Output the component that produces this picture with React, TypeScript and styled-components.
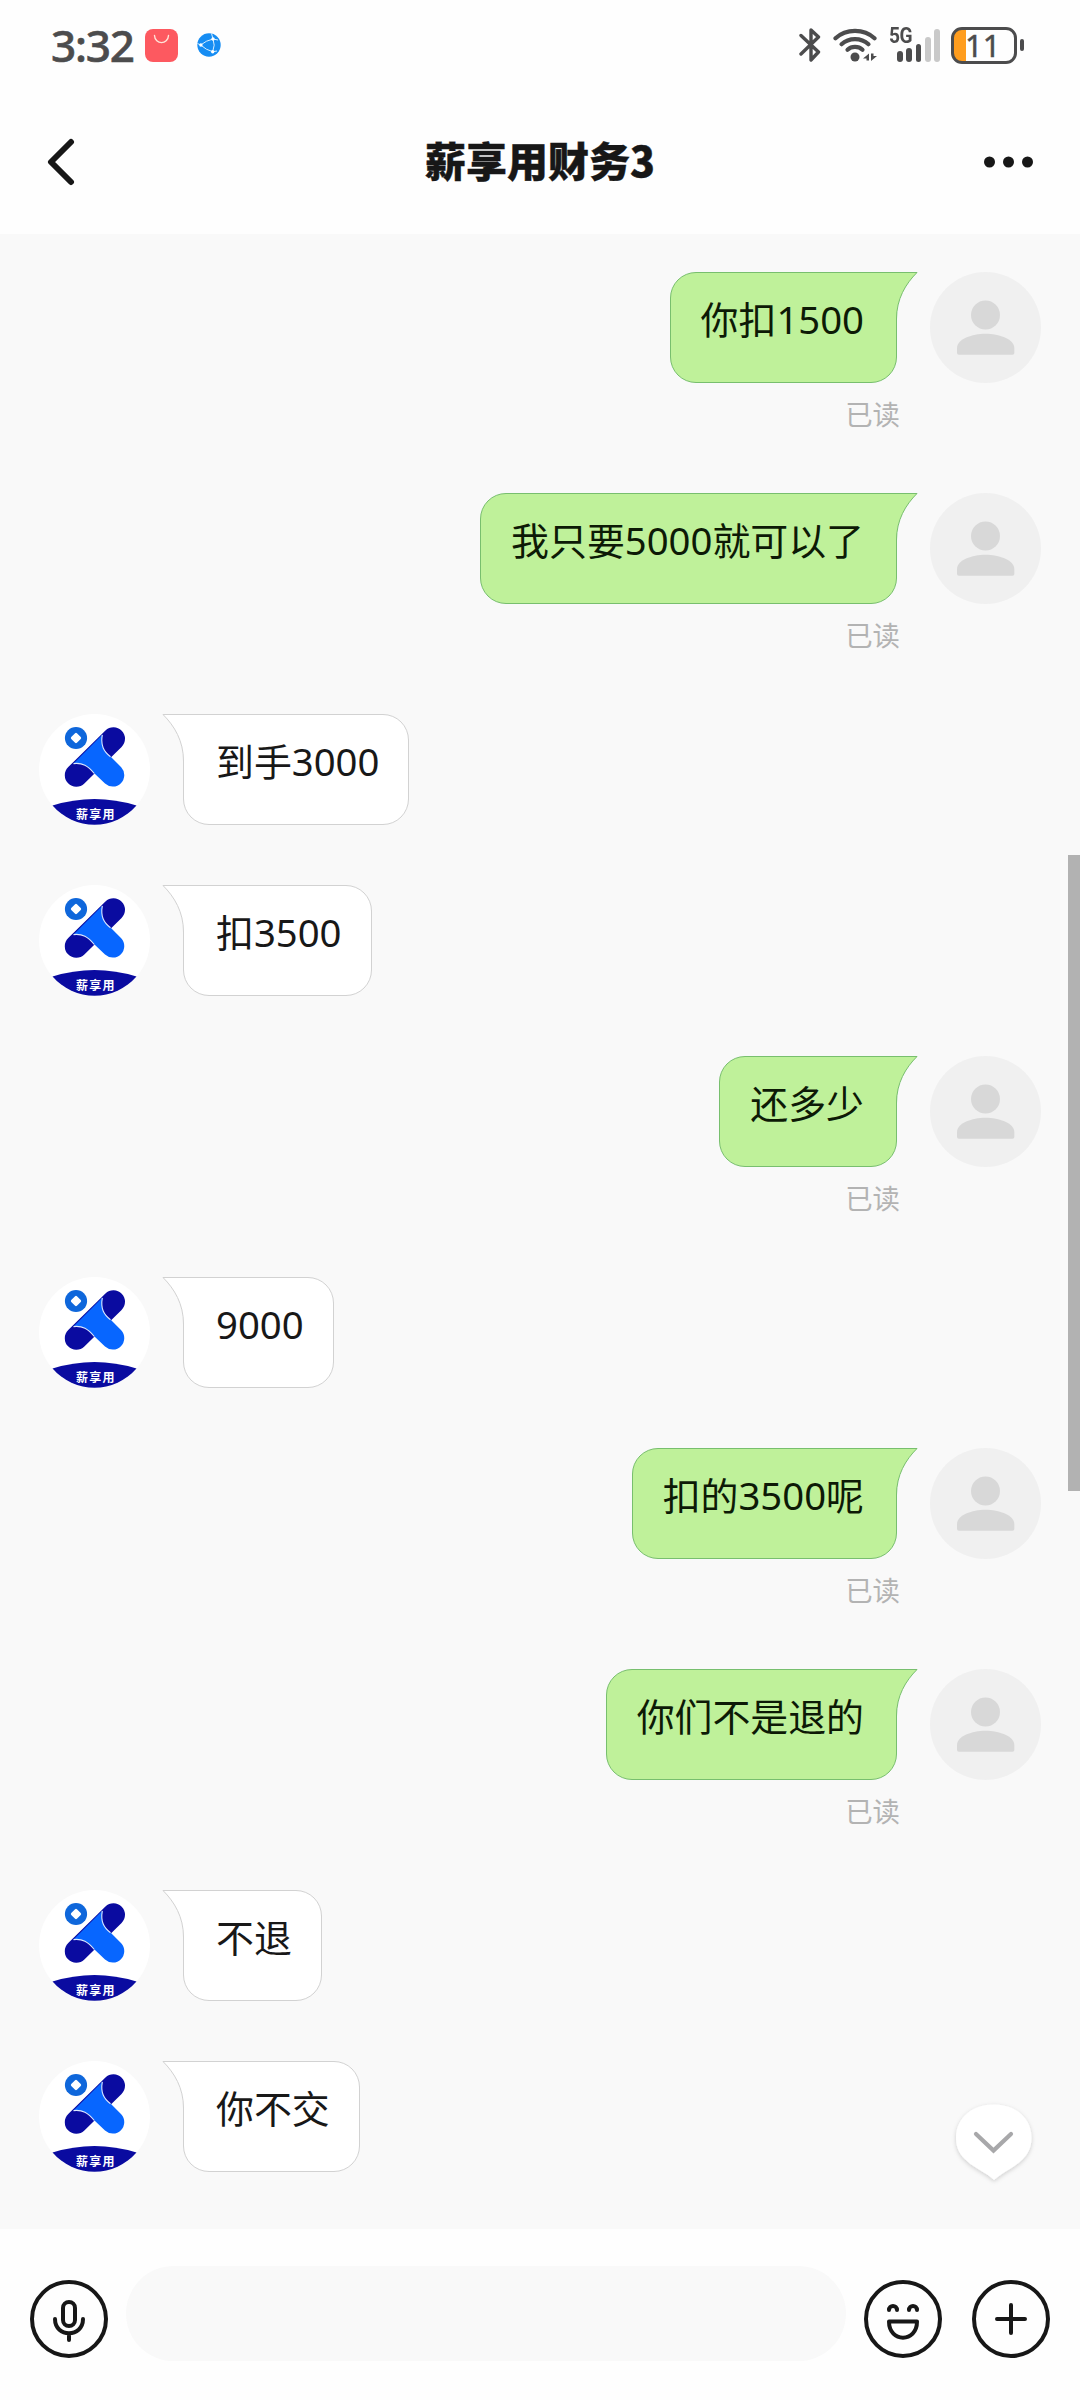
import React from "react";
import styled, { createGlobalStyle, css } from "styled-components";

const GlobalStyle = createGlobalStyle`
  *, *::before, *::after { box-sizing: border-box; }
  body {
    margin: 0;
    background: #fefefe;
    font-family: "Noto Sans", "Noto Sans CJK SC", sans-serif;
    color: #181818;
  }
  svg { display: block; flex: none; }
`;

const Screen = styled.div`
  width: 1080px;
  height: 2400px;
  display: flex;
  flex-direction: column;
  overflow: hidden;
  background: #fefefe;
`;

/* ---------- status bar ---------- */

const StatusBar = styled.div`
  height: 92px;
  flex: none;
  display: flex;
  justify-content: space-between;
  padding: 0 56px 0 51px;
  color: #4c4c4d;
`;

const StatusGroup = styled.div`
  display: flex;
  align-items: center;
  height: 90px;
`;

const Clock = styled.span`
  width: 94px;
  font-size: 44px;
  line-height: 60px;
  letter-spacing: -1.2px;
  font-weight: 500;
  -webkit-text-stroke: 0.6px #4c4c4d;
  white-space: nowrap;
`;

const ShopIcon = styled.svg`
  margin-right: 19px;
`;

const BluetoothIcon = styled.svg`
  margin-right: 12px;
`;

const WifiIcon = styled.svg`
  margin-right: 11px;
`;

const Signal = styled.div`
  position: relative;
  width: 51px;
  height: 34px;
  margin-right: 11px;
  display: flex;
  align-items: flex-end;
  justify-content: flex-end;
  gap: 3.6px;
`;

const SignalBar = styled.span<{ $height: number; $off?: boolean }>`
  width: 5.7px;
  height: ${(p) => p.$height}px;
  border-radius: 3px;
  background: ${(p) => (p.$off ? "#c9c9c9" : "#4c4c4d")};
`;

const NetworkType = styled.span`
  position: absolute;
  left: 0;
  top: -5px;
  font: 700 22px/26px "Roboto", sans-serif;
  letter-spacing: -0.5px;
  transform: scaleX(0.87);
  transform-origin: left;
`;

const Battery = styled.div`
  width: 66px;
  height: 37px;
  border: 3px solid #4c4c4d;
  border-radius: 11px;
  display: flex;
  align-items: center;
  background: linear-gradient(to right, #ff9d1e 12px, transparent 12px);
  font: 400 31px/37px "Noto Sans", sans-serif;
  -webkit-text-stroke: 0.5px #4c4c4d;
  padding-left: 11px;
`;

const BatteryNub = styled.span`
  width: 4px;
  height: 12px;
  margin-left: 3px;
  border-radius: 2px;
  background: #4c4c4d;
`;

/* ---------- header ---------- */

const Header = styled.header`
  height: 142px;
  flex: none;
  display: grid;
  grid-template-columns: 1fr auto 1fr;
  align-items: center;
  padding: 0 47px 3px;

  & > :last-child {
    justify-self: end;
  }
`;

const Title = styled.h1`
  margin: 0;
  padding-bottom: 5px;
  font: 900 41px/60px "Noto Sans CJK SC", sans-serif;
  -webkit-text-stroke: 0.4px #171717;
  color: #171717;
`;

/* ---------- messages ---------- */

const Chat = styled.main`
  position: relative;
  flex: 1;
  min-height: 0;
  display: flex;
  flex-direction: column;
  gap: 60px;
  padding: 38px 39px 0;
  background: #f9f9f9;
`;

const Row = styled.div<{ $mine?: boolean }>`
  display: flex;
  flex: none;
  align-items: flex-start;
  gap: 33px;
  flex-direction: ${(p) => (p.$mine ? "row-reverse" : "row")};
`;

const Stack = styled.div<{ $mine?: boolean }>`
  display: flex;
  flex-direction: column;
  align-items: ${(p) => (p.$mine ? "flex-end" : "flex-start")};
`;

const mineBubble = css`
  padding: 20px 32px 0 30px;
  background: #bff19a;
  border-color: #78bf6e;
  border-top-right-radius: 0;
  color: #0d1a06;
`;

const theirBubble = css`
  padding: 20px 29px 0 32px;
  background: #ffffff;
  border-color: #d2d2d2;
  border-top-left-radius: 0;
  color: #181818;
`;

const Bubble = styled.div<{ $mine?: boolean }>`
  position: relative;
  height: 111px;
  border: 1px solid;
  border-radius: 26px;
  font-size: 37.9px;
  line-height: 52px;
  white-space: nowrap;
  ${(p) => (p.$mine ? mineBubble : theirBubble)}
`;

const Tail = styled.svg<{ $mine?: boolean }>`
  position: absolute;
  top: -1px;
  ${(p) => (p.$mine ? "right: -22px;" : "left: -22px; transform: scaleX(-1);")}
`;

const Digits = styled.span`
  font-size: 38.3px;
`;

const Receipt = styled.span`
  height: 50px;
  padding-top: 12px;
  margin-right: -3px;
  font-size: 27.4px;
  line-height: 40px;
  color: #b3b3b3;
`;

const ScrollThumb = styled.div`
  position: absolute;
  right: 0;
  top: 621px;
  width: 12px;
  height: 636px;
  background: #b2b2b2;
`;

const JumpButton = styled.button`
  position: absolute;
  right: 38px;
  bottom: 38px;
  padding: 0;
  border: 0;
  background: none;
`;

/* ---------- composer ---------- */

const Composer = styled.footer`
  height: 171px;
  flex: none;
  display: flex;
  align-items: flex-start;
  padding: 37px 30px 0;
`;

const IconButton = styled.button`
  margin: 14px 0 0;
  padding: 0;
  border: 0;
  background: none;
`;

const Field = styled.div`
  flex: 1;
  height: 95px;
  margin: 0 18px;
  border-radius: 48px;
  background: #f9f9f9;
`;

const Actions = styled.div`
  display: flex;
  gap: 30px;
`;

function UserAvatar() {
  return (
    <svg width="111" height="111" viewBox="0 0 111 111">
      <circle cx="55.5" cy="55.5" r="55.5" fill="#f0f0f0" />
      <circle cx="55.5" cy="43" r="14.5" fill="#d8d8d8" />
      <path d="M27 81V76C27 67 42 61.7 55.5 61.7S84.3 67 84.3 76V81Q84.3 82.8 82.5 82.8H28.800Q27 82.8 27 81Z" fill="#d8d8d8" />
    </svg>
  );
}

function BrandAvatar() {
  return (
    <svg width="111" height="111" viewBox="0 0 111 111">
      <circle cx="55.5" cy="55.5" r="55.5" fill="#fff" />
      <path d="M37.3 61.3L74.5 24.7" stroke="#0a0ba0" strokeWidth="23" strokeLinecap="round" />
      <path
        d="M34.5 49.5L63.5 20.5C61.5 31 64.5 37.5 71.5 42.5L82.2 53.2A11.5 11.5 0 0 1 66 69.5L55.5 59.5C49 52 43.5 48.5 34.5 49.5Z"
        fill="#0766ff"
      />
      <path d="M63.3 20.8C61.5 31.5 64.5 37.5 71.5 42.8M34.5 49.6C43.5 48.5 49 52 55.3 59.5" fill="none" stroke="#dbe8ff" strokeWidth="1.1" />
      <circle cx="37" cy="24" r="11.1" fill="#0f67db" />
      <rect x="33" y="20" width="8" height="8" rx="1.3" fill="#fff" transform="rotate(45 37 24)" />
      <path d="M13.5 91.5Q55.5 78.5 97.5 91.5A55.5 55.5 0 0 1 13.5 91.5Z" fill="#0a0ba0" />
      <text x="37" y="104.5" fill="#fff" fontSize="12" fontWeight="700" letterSpacing="1.3" fontFamily='"Noto Sans CJK SC", sans-serif'>
        薪享用
      </text>
    </svg>
  );
}

function BubbleTail({ mine }: { mine?: boolean }) {
  return (
    <Tail $mine={mine} width="23" height="52" viewBox="0 0 23 52">
      <path d="M0 .5H22C10.5 12 1.5 27 1.5 47V52H0Z" fill={mine ? "#bff19a" : "#fff"} />
      <path d="M0 .5H22C10.5 12 1.5 27 1.5 47V52" fill="none" stroke={mine ? "#78bf6e" : "#d2d2d2"} />
    </Tail>
  );
}

function MessageText({ text }: { text: string }) {
  return (
    <>
      {text.split(/(\d+)/).map((part, i) => (/^\d+$/.test(part) ? <Digits key={i}>{part}</Digits> : part))}
    </>
  );
}

type MessageData = { text: string; mine?: boolean };

const messages: MessageData[] = [
  { text: "你扣1500", mine: true },
  { text: "我只要5000就可以了", mine: true },
  { text: "到手3000" },
  { text: "扣3500" },
  { text: "还多少", mine: true },
  { text: "9000" },
  { text: "扣的3500呢", mine: true },
  { text: "你们不是退的", mine: true },
  { text: "不退" },
  { text: "你不交" },
];

function Message({ text, mine }: MessageData) {
  return (
    <Row $mine={mine}>
      {mine ? <UserAvatar /> : <BrandAvatar />}
      <Stack $mine={mine}>
        <Bubble $mine={mine}>
          <BubbleTail mine={mine} />
          <MessageText text={text} />
        </Bubble>
        {mine && <Receipt>已读</Receipt>}
      </Stack>
    </Row>
  );
}

function Ring({ children }: { children: React.ReactNode }) {
  return (
    <svg width="78" height="78" viewBox="0 0 78 78" fill="none" stroke="#171717" strokeWidth="4" strokeLinecap="round" strokeLinejoin="round">
      <circle cx="39" cy="39" r="37" />
      {children}
    </svg>
  );
}

export default function App() {
  return (
    <Screen>
      <GlobalStyle />
      <StatusBar>
        <StatusGroup>
          <Clock>3:32</Clock>
          <ShopIcon width="33" height="33" viewBox="0 0 33 33">
            <rect width="33" height="33" rx="8" fill="#fd5960" />
            <path d="M9.5 6.5C10 16 23 16 23.5 6.5" fill="none" stroke="#ffe3d8" strokeWidth="1.4" strokeLinecap="round" />
          </ShopIcon>
          <svg width="24" height="24" viewBox="0 0 24 24">
            <circle cx="12" cy="12" r="11.7" fill="#168df3" />
            <path d="M3.7 12Q9 7.5 16 6Q18.5 12 15.7 18.7Q9 17 3.7 12M16 6L14.5 .5M16 6L21 7M15.7 18.7L20 18M3.7 12L.5 10.5" fill="none" stroke="#d8efff" strokeWidth="1" />
            <circle cx="3.9" cy="12" r="1.7" fill="#fff" />
            <circle cx="16" cy="6" r="1.7" fill="#fff" />
            <circle cx="15.7" cy="18.7" r="1.7" fill="#fff" />
          </svg>
        </StatusGroup>
        <StatusGroup>
          <BluetoothIcon width="22" height="36" viewBox="0 0 22 36" fill="none" stroke="#4c4c4d" strokeWidth="3.4" strokeLinecap="round" strokeLinejoin="round">
            <path d="M2 8.5L19.5 25L12 33V3L19.5 10L2 27" />
          </BluetoothIcon>
          <WifiIcon width="45" height="36" viewBox="0 0 45 36">
            <g fill="none" stroke="#4c4c4d" strokeWidth="4.2" strokeLinecap="round">
              <path d="M2.500 11.2C13 1.3 31 1.3 41.5 11.2" />
              <path d="M8.5 17.2C16 10.3 28 10.3 35.5 17.2" />
              <path d="M14.5 22.8C18.5 19 25.5 19 29.5 22.8" />
            </g>
            <circle cx="22" cy="30" r="4.5" fill="#4c4c4d" />
            <path d="M30 31.5L36 26.5V33.5H33.5V31.5ZM38 26.5H40.5V29H44L38 34Z" fill="#4c4c4d" />
          </WifiIcon>
          <Signal>
            <NetworkType>5G</NetworkType>
            <SignalBar $height={11} />
            <SignalBar $height={14} />
            <SignalBar $height={18.5} />
            <SignalBar $height={25.5} $off />
            <SignalBar $height={33.5} $off />
          </Signal>
          <Battery>11</Battery>
          <BatteryNub />
        </StatusGroup>
      </StatusBar>

      <Header>
        <svg width="28" height="48" viewBox="0 0 28 48" fill="none" stroke="#171717" strokeWidth="6" strokeLinecap="round" strokeLinejoin="round">
          <path d="M24 4L4 24L24 44" />
        </svg>
        <Title>薪享用财务3</Title>
        <svg width="49" height="12" viewBox="0 0 49 12" fill="#171717">
          <circle cx="5.5" cy="6" r="5.5" />
          <circle cx="24.5" cy="6" r="5.5" />
          <circle cx="43.5" cy="6" r="5.5" />
        </svg>
      </Header>

      <Chat>
        {messages.map((m, i) => (
          <Message key={i} {...m} />
        ))}
        <ScrollThumb />
        <JumpButton aria-label="down">
          <svg width="96" height="96" viewBox="0 0 96 96">
            <defs>
              <filter id="pin-shadow" x="-20%" y="-20%" width="140%" height="140%">
                <feDropShadow dx="0" dy="1.5" stdDeviation="2" floodOpacity="0.18" />
              </filter>
            </defs>
            <path d="M48 85C36 73 10 68 10 43C10 22 27 9.5 48 9.5S85.5 22 85.5 43C85.5 68 60 73 48 85Z" fill="#fff" filter="url(#pin-shadow)" />
            <path d="M30 39L47.500 55.5L65 39" fill="none" stroke="#a8a8aa" strokeWidth="4.2" strokeLinecap="round" />
          </svg>
        </JumpButton>
      </Chat>

      <Composer>
        <IconButton aria-label="voice">
          <Ring>
            <rect x="33" y="22" width="12" height="24" rx="6" />
            <path d="M25 39C25 58 53 58 53 39M39 54V60" />
          </Ring>
        </IconButton>
        <Field />
        <Actions>
          <IconButton aria-label="emoji">
            <Ring>
              <path d="M25 30C25 24.5 33 24.5 33 30M45 30C45 24.5 53 24.5 53 30M25 41.5H53C53 63 25 63 25 41.5Z" />
            </Ring>
          </IconButton>
          <IconButton aria-label="more">
            <Ring>
              <path d="M25 39H53M39 25V53" />
            </Ring>
          </IconButton>
        </Actions>
      </Composer>
    </Screen>
  );
}
